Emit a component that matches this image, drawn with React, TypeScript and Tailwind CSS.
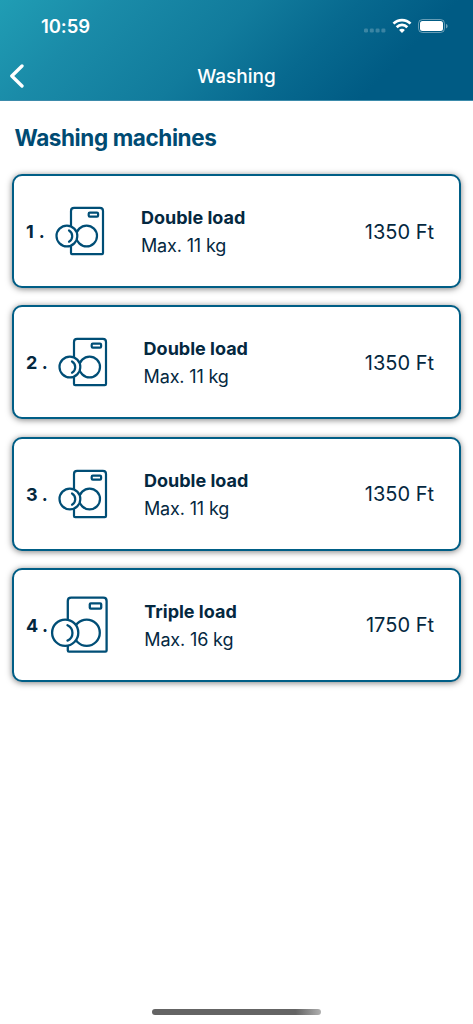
type Machine = {
    id: number
    name: string
    max: string
    price: string
    size: 'double' | 'triple'
    numberWidth: string
    numberSpacing: string
    iconGap: string
}

const machines: Machine[] = [
    { id: 1, name: 'Double load', max: 'Max. 11 kg', price: '1350 Ft', size: 'double', numberWidth: 'w-[20.4px]', numberSpacing: 'tracking-[5px]', iconGap: 'ml-[30.6px]' },
    { id: 2, name: 'Double load', max: 'Max. 11 kg', price: '1350 Ft', size: 'double', numberWidth: 'w-[22.8px]', numberSpacing: 'tracking-[4.5px]', iconGap: 'ml-[30.8px]' },
    { id: 3, name: 'Double load', max: 'Max. 11 kg', price: '1350 Ft', size: 'double', numberWidth: 'w-[23.2px]', numberSpacing: 'tracking-[4.5px]', iconGap: 'ml-[30.8px]' },
    { id: 4, name: 'Triple load', max: 'Max. 16 kg', price: '1750 Ft', size: 'triple', numberWidth: 'w-6', numberSpacing: 'tracking-[4.5px]', iconGap: 'ml-[30.3px]' },
]

const StatusBar = () => {
    return (
        <div className="flex h-[52px] items-center justify-between pl-[41px] pr-[25px]">
            <span className="text-[18.5px] font-semibold leading-none tracking-[-0.1px]">10:59</span>
            <div className="flex items-center">
                <svg width="22" height="18" viewBox="0 0 22 18" fill="#fff" fillOpacity="0.22">
                    <rect x="0" y="11.5" width="4" height="4" rx="1.2" />
                    <rect x="5.8" y="11.5" width="4" height="4" rx="1.2" />
                    <rect x="11.6" y="11.5" width="4" height="4" rx="1.2" />
                    <rect x="17.4" y="11.5" width="4" height="4" rx="1.2" />
                </svg>
                <svg className="ml-[6px]" width="20" height="16" viewBox="0 0 20 16" fill="none" stroke="#fff" strokeWidth="2.7">
                    <path d="M1.5 5.6a12 12 0 0 1 17 0" />
                    <path d="M4.7 9.2a7.4 7.4 0 0 1 10.6 0" />
                    <path d="M10 15 7.1 12a4 4 0 0 1 5.8 0Z" fill="#fff" stroke="none" />
                </svg>
                <svg className="ml-[6px]" width="30" height="16" viewBox="0 0 30 16">
                    <rect x="0.5" y="1.5" width="26" height="13" rx="4" fill="none" stroke="#fff" strokeOpacity="0.4" />
                    <rect x="2" y="3" width="23" height="10" rx="2.5" fill="#fff" />
                    <path d="M28 6v4.4c1-.4 1.6-1.2 1.6-2.2S29 6.4 28 6Z" fill="#fff" fillOpacity="0.45" />
                </svg>
            </div>
        </div>
    )
}

const Header = () => {
    return (
        <header className="h-[101px] border-b border-[#3b8bab] bg-[linear-gradient(135deg,#209db4_0%,#1a8ba8_20%,#117b9c_45%,#07698f_63%,#005b84_80%)] bg-origin-border text-white">
            <StatusBar />
            <div className="grid h-12 grid-cols-[1fr_auto_1fr] items-center">
                <button className="pl-[9px]" aria-label="Back">
                    <svg width="16" height="24" viewBox="0 0 16 24" fill="none" stroke="#fff" strokeWidth="3.3" strokeLinecap="round" strokeLinejoin="round">
                        <path d="M13 2 2.8 12 13 22" />
                    </svg>
                </button>
                <h1 className="text-[19px] font-medium leading-none">Washing</h1>
            </div>
        </header>
    )
}

const MachineIcon = ({ size }: { size: Machine['size'] }) => {
    if (size === 'triple') {
        return (
            <svg className="shrink-0" width="64" height="64" viewBox="0 0 64 64" fill="none" stroke="#004e76" strokeWidth="2.3">
                <path d="M17.8 27V8q0-3.300 3.300-3.300h32.200q3.300 0 3.300 3.300v49.400q0 1.200-1.200 1.200H19q-1.200 0-1.200-1.200V53" />
                <rect x="39.8" y="10.3" width="11.4" height="5.4" rx="1" />
                <circle cx="36.7" cy="39.7" r="13.1" />
                <circle cx="15.2" cy="39.7" r="13.1" fill="#fff" />
                <path d="M17.5 32.2c6.600 3 6.600 12.600 0 15.400" strokeLinecap="round" />
            </svg>
        )
    }

    return (
        <svg className="shrink-0" width="64" height="64" viewBox="0 0 64 64" fill="none" stroke="#004e76" strokeWidth="2.2">
            <path d="M25 27V12q0-3.100 3.100-3.100h25.800q3.100 0 3.100 3.100v42q0 1.200-1.200 1.200H26.200Q25 55.200 25 54v-7" />
            <rect x="42.7" y="13.7" width="9.4" height="4" rx="1.1" />
            <circle cx="40.6" cy="37" r="10.4" />
            <circle cx="20.9" cy="37" r="10.4" fill="#fff" />
            <path d="M23 31.5c4.300 2.500 4.300 8.800 0 11.200" strokeLinecap="round" />
        </svg>
    )
}

const MachineCard = ({ machine }: { machine: Machine }) => {
    return (
        <li className="flex h-[114px] items-center rounded-[10px] border-2 border-[#005e86] bg-white pl-3 pr-[25px] text-[#04283f] shadow-[0_1px_6px_rgba(0,0,0,0.5)]">
            <span className={`${machine.numberWidth} ${machine.numberSpacing} shrink-0 whitespace-nowrap pt-[2px] text-[18px] font-bold leading-none`}>
                {machine.id}.
            </span>
            <MachineIcon size={machine.size} />
            <div className={`${machine.iconGap} pt-[2px]`}>
                <h3 className="text-[18px] font-bold leading-7">{machine.name}</h3>
                <p className="text-[18px] leading-7 tracking-[-0.15px]">{machine.max}</p>
            </div>
            <span className="ml-auto pt-px text-[20px]">{machine.price}</span>
        </li>
    )
}

const App = () => {
    return (
        <div className="flex h-[1024px] flex-col bg-white font-[Inter,sans-serif]">
            <Header />
            <main className="flex-1 px-3 pt-[21px]">
                <h2 className="pl-[2.5px] text-[22.5px] font-bold leading-8 tracking-[-0.4px] text-[#004b73]">Washing machines</h2>
                <ul className="mt-5 flex flex-col gap-[17.33px]">
                    {machines.map((machine) => (
                        <MachineCard key={machine.id} machine={machine} />
                    ))}
                </ul>
            </main>
            <div className="mb-[9px] ml-[152px] h-[6px] w-[169px] rounded-full bg-linear-to-r from-[#646464] from-85% to-[#b0b0b0]" />
        </div>
    )
}

export default App
